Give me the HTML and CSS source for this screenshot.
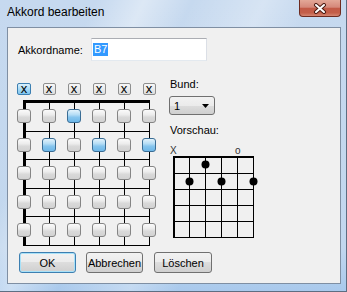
FILE: index.html
```html
<!DOCTYPE html>
<html lang="de">

<head>
  <meta charset="UTF-8">
  <title>Akkord bearbeiten</title>
  <link rel="stylesheet" href="styles.css">
</head>

<body>
  <div class="window">
    <div class="titlebar">
      <span class="title">Akkord bearbeiten</span>
      <button class="close" title="Schließen">
        <svg width="14" height="11" viewBox="0 0 14 11">
          <path d="M3 2 L11 9 M11 2 L3 9" stroke="#4a1a12" stroke-width="4" stroke-linecap="round" />
          <path d="M3 2 L11 9 M11 2 L3 9" stroke="#fff" stroke-width="2" stroke-linecap="round" />
        </svg>
      </button>
    </div>

    <div class="client">
      <div class="name-row">
        <label class="name-label">Akkordname:</label>
        <div class="textbox"><span class="sel">B7</span></div>
      </div>

      <div class="main">
        <div class="fretboard">
          <!-- muted strings -->
          <div class="mutes">
            <button class="mute on">x</button>
            <button class="mute">x</button>
            <button class="mute">x</button>
            <button class="mute">x</button>
            <button class="mute">x</button>
            <button class="mute">x</button>
          </div>

          <div class="board">
            <svg class="lines" width="139" height="148">
              <rect x="6" y="1" width="127" height="3" fill="#000" />
              <rect x="7" y="32" width="126" height="1" fill="#000" />
              <rect x="7" y="60" width="126" height="1" fill="#000" />
              <rect x="7" y="89" width="126" height="1" fill="#000" />
              <rect x="7" y="117" width="126" height="1" fill="#000" />
              <rect x="7" y="146" width="126" height="1" fill="#000" />
              <rect x="6" y="1" width="3" height="146" fill="#000" />
              <rect x="32" y="1" width="1" height="146" fill="#000" />
              <rect x="57" y="1" width="1" height="146" fill="#000" />
              <rect x="82" y="1" width="1" height="146" fill="#000" />
              <rect x="107" y="1" width="1" height="146" fill="#000" />
              <rect x="132" y="1" width="1" height="146" fill="#000" />
            </svg>
            <div class="frets">
              <button class="fret"></button><button class="fret"></button><button class="fret on"></button>
              <button class="fret"></button><button class="fret"></button><button class="fret"></button>

              <button class="fret"></button><button class="fret on"></button><button class="fret"></button>
              <button class="fret on"></button><button class="fret"></button><button class="fret on"></button>

              <button class="fret"></button><button class="fret"></button><button class="fret"></button>
              <button class="fret"></button><button class="fret"></button><button class="fret"></button>

              <button class="fret"></button><button class="fret"></button><button class="fret"></button>
              <button class="fret"></button><button class="fret"></button><button class="fret"></button>

              <button class="fret"></button><button class="fret"></button><button class="fret"></button>
              <button class="fret"></button><button class="fret"></button><button class="fret"></button>
            </div>
          </div>
        </div>

        <div class="side">
          <div class="side-label">Bund:</div>
          <div class="combo">
            <span>1</span>
            <svg width="7" height="4" viewBox="0 0 7 4"><path d="M0 0 H7 L3.5 4 Z" fill="#000" /></svg>
          </div>
          <div class="side-label gap">Vorschau:</div>
          <svg class="preview" width="100" height="102">
            <text x="5" y="17" class="mark">X</text>
            <text x="70" y="17" class="mark">o</text>
            <rect x="8" y="19" width="81" height="2" fill="#000" />
            <rect x="8" y="36" width="81" height="1" fill="#000" />
            <rect x="8" y="52" width="81" height="1" fill="#000" />
            <rect x="8" y="68" width="81" height="1" fill="#000" />
            <rect x="8" y="84" width="81" height="1" fill="#000" />
            <rect x="8" y="100" width="81" height="1" fill="#000" />
            <rect x="8" y="19" width="2" height="82" fill="#000" />
            <rect x="24" y="19" width="1" height="82" fill="#000" />
            <rect x="40" y="19" width="1" height="82" fill="#000" />
            <rect x="56" y="19" width="1" height="82" fill="#000" />
            <rect x="72" y="19" width="1" height="82" fill="#000" />
            <rect x="88" y="19" width="1" height="82" fill="#000" />
            <circle cx="40.5" cy="27.5" r="4" fill="#000" />
            <circle cx="24.5" cy="44.5" r="4" fill="#000" />
            <circle cx="56.5" cy="44.5" r="4" fill="#000" />
            <circle cx="88.5" cy="44.5" r="4" fill="#000" />
          </svg>
        </div>
      </div>

      <div class="actions">
        <button class="btn default">OK</button>
        <button class="btn">Abbrechen</button>
        <button class="btn">Löschen</button>
      </div>
    </div>
  </div>
</body>

</html>
```

FILE: styles.css
```css
body {
  margin: 0;
  font-family: "Liberation Sans", Arial, sans-serif;
  font-size: 11px;
  background: #fff;
}

.window {
  width: 347px;
  height: 292px;
  box-sizing: border-box;
  padding: 0 5px 7px 7px;
  display: flex;
  flex-direction: column;
  background:
    linear-gradient(115deg, rgba(255, 255, 255, 0) 20%, rgba(255, 255, 255, 0.4) 30%, rgba(255, 255, 255, 0) 40%, rgba(255, 255, 255, 0.3) 55%, rgba(255, 255, 255, 0) 65%),
    linear-gradient(to bottom, #c6d9ef 0%, #c2d7ee 85%, #a9c9ec 100%);
  border-right: 1px solid #5d6e82;
  border-bottom: 1px solid #5d6e82;
}

.titlebar {
  height: 27px;
  display: flex;
  align-items: flex-start;
  flex-shrink: 0;
}

.title {
  margin-top: 5px;
  font-size: 12px;
  line-height: 15px;
  color: #000;
}

.close {
  margin-left: auto;
  width: 42px;
  height: 17px;
  padding: 0;
  display: flex;
  align-items: center;
  justify-content: center;
  border: 1px solid #6e2b20;
  border-top: none;
  border-radius: 0 0 4px 4px;
  background: linear-gradient(to bottom, #e3a898 0%, #d5887a 45%, #c25a47 52%, #c45e48 80%, #d58672 100%);
}

.client {
  height: 257px;
  box-sizing: border-box;
  background: #f0f0f0;
  border: 1px solid #7f8fa3;
  padding: 10px 10px 0 10px;
}

.name-row {
  display: flex;
  align-items: center;
  height: 23px;
}

.name-label {
  width: 73px;
}

.textbox {
  width: 116px;
  height: 23px;
  box-sizing: border-box;
  display: flex;
  align-items: center;
  padding-left: 1px;
  background: #fff;
  border: 1px solid;
  border-color: #abadb3 #dbdfe6 #e3e9ef #e2e3ea;
}

.sel {
  display: inline-block;
  line-height: 13px;
  padding: 0 1px;
  background: #3399ff;
  color: #fff;
}

.main {
  display: flex;
  align-items: flex-start;
  margin-top: 21px;
}

.fretboard {
  width: 139px;
  margin-left: -1px;
}

.mutes {
  display: grid;
  grid-template-columns: repeat(6, 14px);
  column-gap: 11px;
  height: 13px;
}

.mute {
  justify-self: center;
  width: 13px;
  height: 12px;
  margin-top: 1px;
  padding: 0 0 1px;
  box-sizing: border-box;
  display: flex;
  align-items: center;
  justify-content: center;
  border: 1px solid #8e8f8f;
  border-radius: 2px;
  background: linear-gradient(to bottom, #f7f7f7, #dedede);
  font-family: "Liberation Sans", Arial, sans-serif;
  font-size: 13px;
  line-height: 10px;
  color: #000;
}

.mute.on {
  width: 14px;
  border-color: #3c7fb1;
  background: linear-gradient(to bottom, #dcf1fc 0%, #a9dbf6 50%, #7ec4ee 100%);
}

.board {
  position: relative;
  height: 148px;
  margin-top: 4px;
}

.lines {
  position: absolute;
  left: 0;
  top: 0;
}

.frets {
  position: relative;
  padding-top: 10px;
  display: grid;
  grid-template-columns: repeat(6, 14px);
  grid-auto-rows: 14px;
  column-gap: 11px;
  row-gap: 14.5px;
}

.fret {
  width: 14px;
  height: 14px;
  padding: 0;
  box-sizing: border-box;
  border: 1px solid #858585;
  border-radius: 3px;
  background: linear-gradient(to bottom, #fbfbfb 0%, #ececec 40%, #d9d9d9 60%, #d2d2d2 100%);
}

.fret.on {
  border-color: #3a6d95;
  background: linear-gradient(to bottom, #e3f3fc 0%, #b3dcf5 40%, #86c5ee 60%, #6db7e8 100%);
}

.side {
  margin-left: 13px;
  margin-top: -4px;
}

.side-label {
  line-height: 13px;
  padding-left: 1px;
}

.side-label.gap {
  margin-top: 9px;
}

.combo {
  margin-top: 5px;
  width: 46px;
  height: 19px;
  box-sizing: border-box;
  display: flex;
  align-items: center;
  justify-content: space-between;
  padding: 0 5px 0 4px;
  border: 1px solid #707070;
  border-radius: 3px;
  background: linear-gradient(to bottom, #f2f2f2 0%, #ebebeb 50%, #dddddd 50%, #cfcfcf 100%);
}

.preview {
  display: block;
  margin-left: -4px;
}

.mark {
  font-family: "Liberation Sans", Arial, sans-serif;
  font-size: 10px;
  fill: #333;
}

.actions {
  display: flex;
  margin-top: 5px;
  margin-left: 1px;
}

.btn {
  width: 57px;
  height: 21px;
  margin-right: 10px;
  padding: 0;
  box-sizing: border-box;
  border: 1px solid #707070;
  border-radius: 3px;
  background: linear-gradient(to bottom, #f2f2f2 0%, #ebebeb 50%, #dddddd 50%, #cfcfcf 100%);
  font-family: "Liberation Sans", Arial, sans-serif;
  font-size: 11px;
  color: #000;
}

.btn:nth-child(2) {
  margin-right: 11px;
}

.btn:last-child {
  width: 58px;
}

.btn.default {
  border-color: #3c7fb1;
  box-shadow: inset 0 0 0 1px #a8e1f8;
}
```
